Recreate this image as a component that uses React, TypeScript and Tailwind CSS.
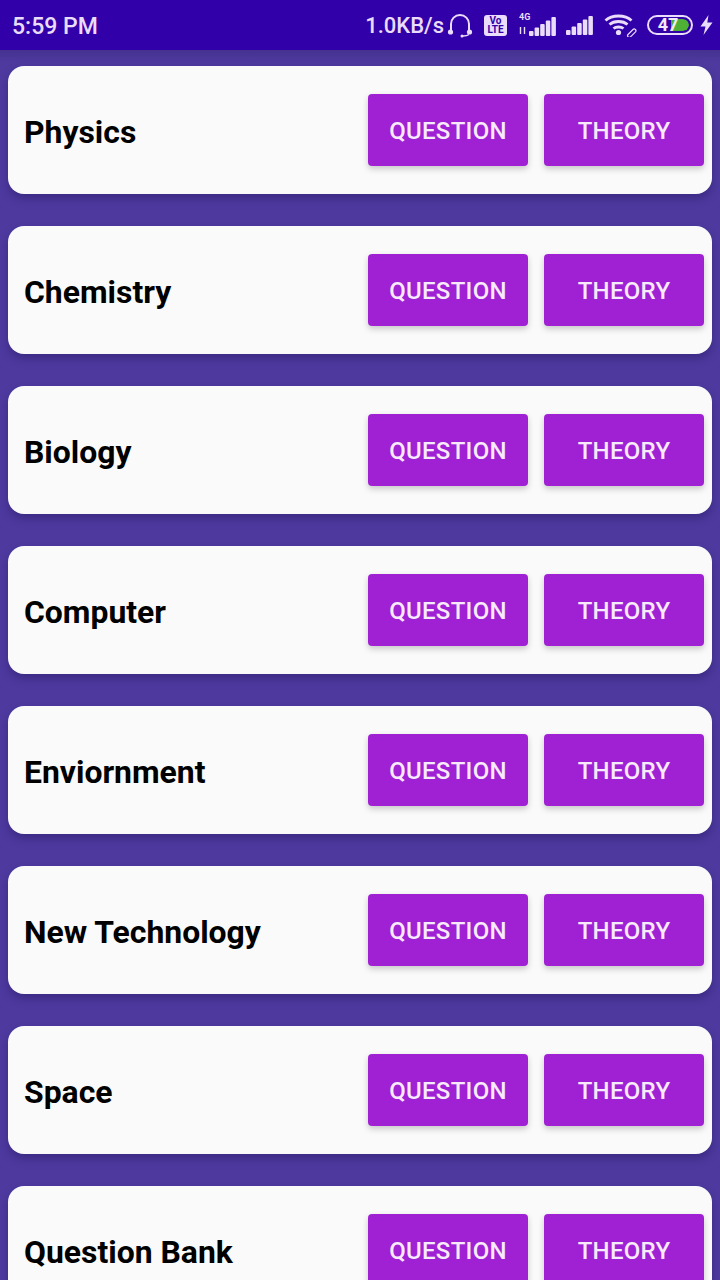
import * as React from "react";

const subjects = [
  "Physics",
  "Chemistry",
  "Biology",
  "Computer",
  "Enviornment",
  "New Technology",
  "Space",
  "Question Bank",
];

function SignalBars() {
  return (
    <svg width="27" height="20" viewBox="0 0 27 20" fill="#eadcfb">
      <rect x="0" y="14" width="4.5" height="5" rx="1" />
      <rect x="5.6" y="10.5" width="4.5" height="8.5" rx="1" />
      <rect x="11.2" y="7" width="4.5" height="12" rx="1" />
      <rect x="16.8" y="3.5" width="4.5" height="15.500" rx="1" />
      <rect x="22.4" y="0" width="4.5" height="19" rx="1" />
    </svg>
  );
}

function StatusBar() {
  return (
    <div className="relative z-10 flex h-[50px] shrink-0 items-center justify-between bg-[#3200a8] pl-3 pr-[7px] text-[#eadcfb] font-['Roboto',sans-serif] font-medium">
      <span className="text-[23px] leading-none pt-[2px]">5:59 PM</span>
      <div className="flex items-center">
        <span className="text-[22px] leading-none pt-[2px]">1.0KB/s</span>
        {/* headset */}
        <svg className="ml-[3px]" width="26" height="26" viewBox="0 0 26 26" fill="none" stroke="#eadcfb" strokeWidth="2">
          <path d="M4 20V12a9 9 0 0 1 18 0v8" />
          <circle cx="3.5" cy="20" r="2.6" fill="#eadcfb" stroke="none" />
          <circle cx="22.5" cy="20" r="2.6" fill="#eadcfb" stroke="none" />
          <path d="M22 22.5c-2 1.5-4 1.5-6 1.5" strokeWidth="1.5" />
          <circle cx="15" cy="24" r="1.5" fill="#eadcfb" stroke="none" />
        </svg>
        {/* volte badge */}
        <div className="ml-[11px] flex h-[21px] w-[23px] flex-col items-center justify-center rounded-[3px] bg-[#eadcfb] text-[10px] font-bold leading-[9px] text-[#3200a8]">
          <span>Vo</span>
          <span>LTE</span>
        </div>
        <div className="relative ml-[11px] h-[24px] w-[38px]">
          <span className="absolute left-[1px] top-0 text-[9px] font-bold leading-none">4G</span>
          <svg className="absolute bottom-[2px] left-0" width="9" height="9" viewBox="0 0 9 9" stroke="#eadcfb" strokeWidth="1.4">
            <path d="M2.5 1v7M6.5 1v7" />
          </svg>
          <div className="absolute bottom-0 right-0">
            <SignalBars />
          </div>
        </div>
        <div className="ml-[10px] mt-[1px]">
          <SignalBars />
        </div>
        {/* wifi */}
        <svg className="ml-[11px]" width="33" height="24" viewBox="0 0 33 24" fill="none" stroke="#eadcfb" strokeWidth="2.8">
          <path d="M1.500 7.500C8 1.500 21 1.500 27.500 7.500" />
          <path d="M5.500 11.500C10 7.500 19 7.500 23.500 11.500" />
          <path d="M9.500 15.500C12 13.500 17 13.500 19.500 15.500" />
          <circle cx="14.500" cy="19.500" r="2.600" fill="#eadcfb" stroke="none" />
          <path d="M24 21.500l5-5a1.700 1.700 0 0 1 2.500 2.300l-5 5a1.700 1.700 0 0 1-2.500-2.300z" strokeWidth="1.2" />
        </svg>
        {/* battery */}
        <div className="relative ml-[10px] h-[20px] w-[46px] overflow-hidden rounded-full border-2 border-[#eadcfb]">
          <div className="absolute inset-y-[2px] left-[2px] w-[38px] rounded-full overflow-hidden">
            <div className="ml-[20px] h-full w-[18px] rounded-r-full bg-[#4eb035]" />
          </div>
          <span className="absolute inset-0 flex items-center justify-center pr-[4px] text-[18px] font-bold leading-none text-[#f2eafc]">
            47
          </span>
        </div>
        <svg className="ml-[7px]" width="13" height="20" viewBox="0 0 13 20" fill="#eadcfb">
          <path d="M8.500 0L0.500 11.500H5.500L3.500 20L12.500 7.500H7.300L8.500 0Z" />
        </svg>
      </div>
    </div>
  );
}

function SubjectButton({ label }: { label: string }) {
  return (
    <button className="flex h-[72px] w-[160px] items-center justify-center rounded-[4px] bg-[#a020d4] pt-[1px] text-[24px] font-medium tracking-[0.3px] text-[#f6eafb] shadow-[0_3px_6px_rgba(0,0,0,0.2)]">
      {label}
    </button>
  );
}

function SubjectCard({ name }: { name: string }) {
  return (
    <div className="flex h-[128px] shrink-0 items-center justify-between rounded-[16px] bg-[#fafafa] pl-4 pr-2 shadow-[0_5px_10px_rgba(20,5,70,0.3)]">
      <span className="text-[31.900px] font-bold leading-none text-black pt-[6px]">{name}</span>
      <div className="flex gap-4">
        <SubjectButton label="QUESTION" />
        <SubjectButton label="THEORY" />
      </div>
    </div>
  );
}

export default function App() {
  return (
    <div className="flex h-[1280px] w-[720px] flex-col overflow-hidden bg-[#4e3a9f] font-['Roboto',sans-serif]">
      <StatusBar />
      <div className="flex shrink-0 flex-col gap-8 bg-[linear-gradient(#45318f,#4e3a9f_12px)] px-2 pt-4">
        {subjects.map((s) => (
          <SubjectCard key={s} name={s} />
        ))}
      </div>
    </div>
  );
}
